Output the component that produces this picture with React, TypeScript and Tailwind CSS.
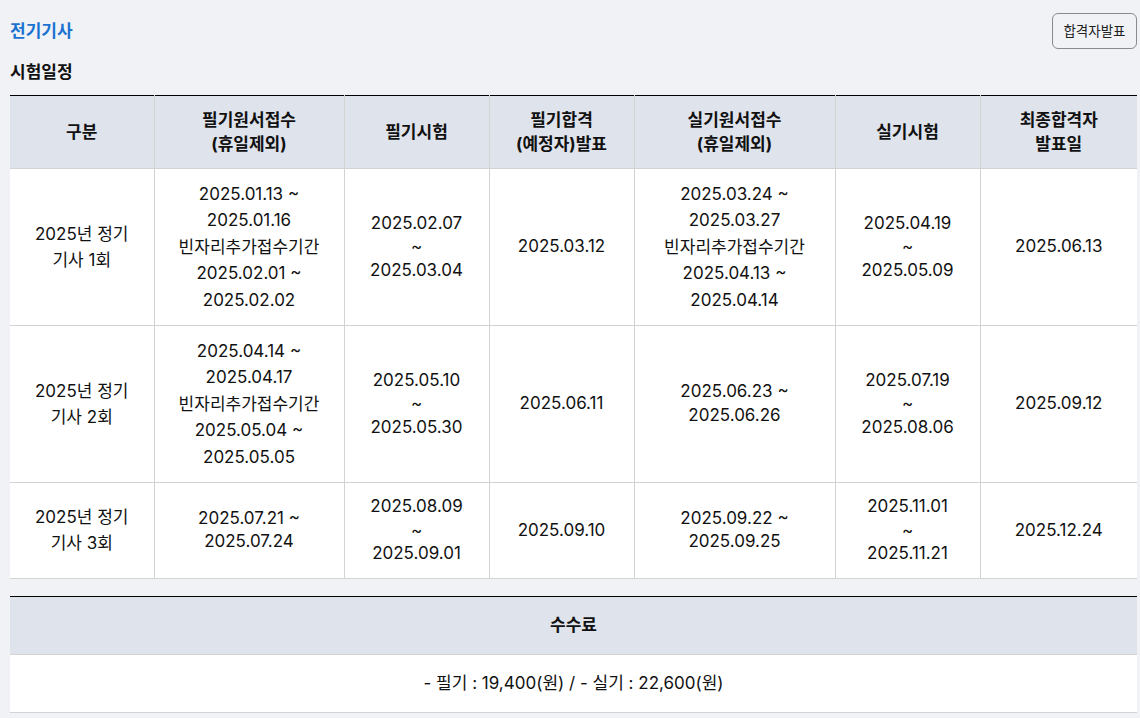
import React from 'react';

type Cell = string[];

const font = { fontFamily: 'Inter, "Noto Sans CJK KR", sans-serif' };

export default function App() {
  const headers: Cell[] = [
    ['구분'],
    ['필기원서접수', '(휴일제외)'],
    ['필기시험'],
    ['필기합격', '(예정자)발표'],
    ['실기원서접수', '(휴일제외)'],
    ['실기시험'],
    ['최종합격자', '발표일'],
  ];

  const rows: Cell[][] = [
    [
      ['2025년 정기', '기사 1회'],
      ['2025.01.13 ~', '2025.01.16', '빈자리추가접수기간', '2025.02.01 ~', '2025.02.02'],
      ['2025.02.07', '~', '2025.03.04'],
      ['2025.03.12'],
      ['2025.03.24 ~', '2025.03.27', '빈자리추가접수기간', '2025.04.13 ~', '2025.04.14'],
      ['2025.04.19', '~', '2025.05.09'],
      ['2025.06.13'],
    ],
    [
      ['2025년 정기', '기사 2회'],
      ['2025.04.14 ~', '2025.04.17', '빈자리추가접수기간', '2025.05.04 ~', '2025.05.05'],
      ['2025.05.10', '~', '2025.05.30'],
      ['2025.06.11'],
      ['2025.06.23 ~', '2025.06.26'],
      ['2025.07.19', '~', '2025.08.06'],
      ['2025.09.12'],
    ],
    [
      ['2025년 정기', '기사 3회'],
      ['2025.07.21 ~', '2025.07.24'],
      ['2025.08.09', '~', '2025.09.01'],
      ['2025.09.10'],
      ['2025.09.22 ~', '2025.09.25'],
      ['2025.11.01', '~', '2025.11.21'],
      ['2025.12.24'],
    ],
  ];

  const widths = ['w-[144px]', 'w-[190px]', 'w-[145px]', 'w-[145px]', 'w-[201px]', 'w-[145px]', 'w-[157px]'];

  const hasKorean = (lines: string[]) => lines.some((l) => /[가-힣]/.test(l));

  return (
    <div className="min-h-screen bg-[#f0f2f6] pl-[10px] pr-[3px] text-[#111111]" style={font}>
      <div className="flex items-center justify-between pt-[13px]">
        <h1 className="text-[17px] font-bold leading-6 text-[#1a73d1]">전기기사</h1>
        <button className="h-[36px] rounded-md border border-[#8a8a8a] px-[10.5px] text-[13.5px] text-[#222222]">
          합격자발표
        </button>
      </div>

      <h2 className="mt-[11px] mb-[11px] text-[17px] font-bold leading-6">시험일정</h2>

      <table className="w-full table-fixed border-collapse border-t border-t-black bg-white text-center text-[17px]">
        <colgroup>
          {widths.map((w, i) => (
            <col key={i} className={w} />
          ))}
        </colgroup>
        <thead>
          <tr className="bg-[#dfe3eb]">
            {headers.map((h, i) => (
              <th
                key={i}
                className={`border-b border-[#d3d3d3] py-3 font-bold leading-6 ${i > 0 ? 'border-l' : ''}`}
              >
                {h.map((line, j) => (
                  <div key={j}>{line}</div>
                ))}
              </th>
            ))}
          </tr>
        </thead>
        <tbody>
          {rows.map((row, r) => (
            <tr key={r}>
              {row.map((cell, c) => (
                <td
                  key={c}
                  className={`border-b border-[#d3d3d3] py-3 align-middle ${c > 0 ? 'border-l' : ''} ${
                    hasKorean(cell) ? 'leading-[26.4px]' : 'leading-[23.6px]'
                  }`}
                >
                  {cell.map((line, j) => (
                    <div key={j}>{line}</div>
                  ))}
                </td>
              ))}
            </tr>
          ))}
        </tbody>
      </table>

      <table className="mt-[17px] w-full border-collapse border-t border-t-black bg-white text-center text-[17px]">
        <thead>
          <tr className="bg-[#dfe3eb]">
            <th className="border-b border-[#d3d3d3] py-[16.5px] font-bold leading-6">수수료</th>
          </tr>
        </thead>
        <tbody>
          <tr>
            <td className="border-b border-[#d3d3d3] py-[16.5px] leading-6">- 필기 : 19,400(원) / - 실기 : 22,600(원)</td>
          </tr>
        </tbody>
      </table>
    </div>
  );
}
